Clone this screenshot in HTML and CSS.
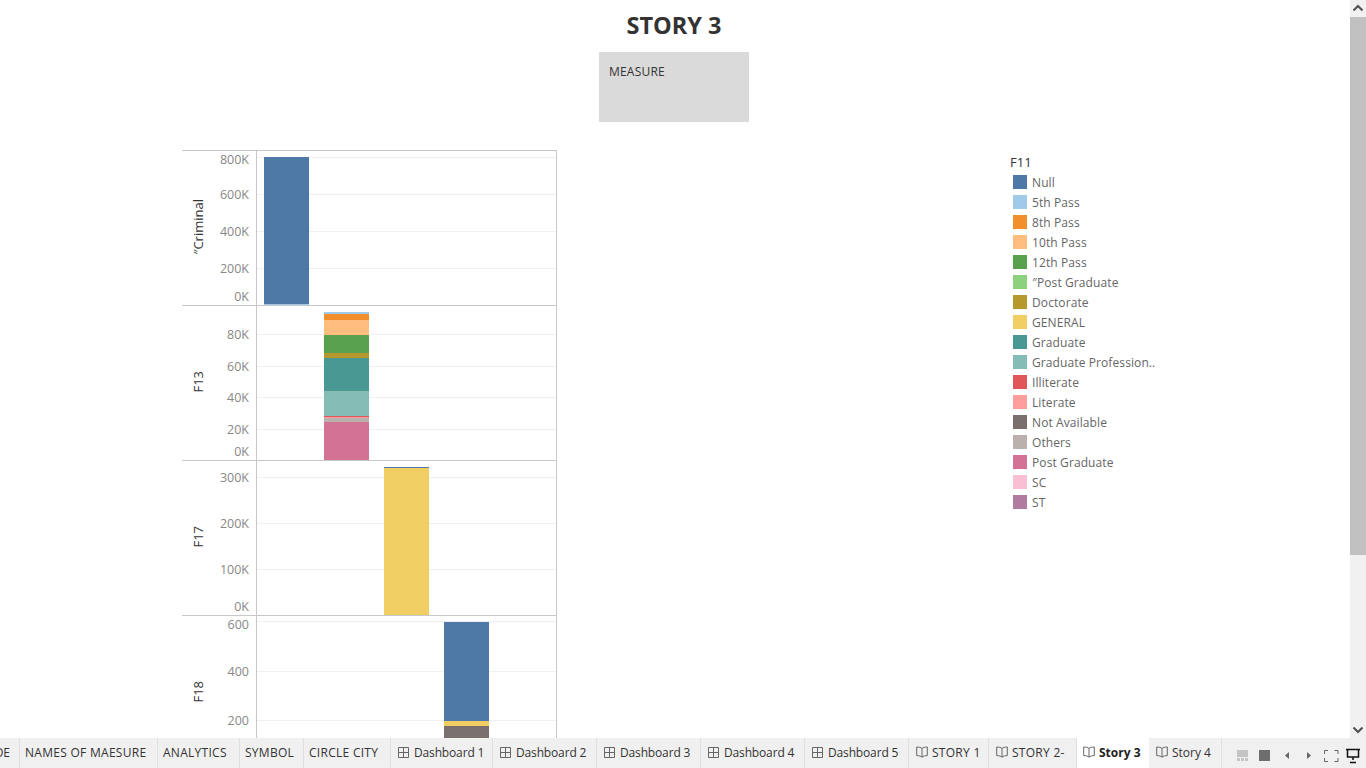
FILE: index.html
```html
<!DOCTYPE html>
<html lang="en">
<head>
<meta charset="utf-8">
<title>Story 3</title>
<link rel="stylesheet" href="styles.css">
</head>
<body>
<svg class="defs" width="0" height="0" aria-hidden="true">
  <symbol id="i-grid" viewBox="0 0 11 11"><path d="M.5.5h10v10H.5zM5.5.5v10M.5 5.5h10" fill="none" stroke="#666"/></symbol>
  <symbol id="i-book" viewBox="0 0 12 12"><path d="M6 2.500C5 1.500 3 1 .7 1v8.600c2.300 0 4.300.5 5.300 1.600 1-1.100 3-1.600 5.300-1.600V1C9 1 7 1.500 6 2.500zM6 2.500v8.700" fill="none" stroke="#666"/></symbol>
</svg>
<div class="main">
  <div class="content">
    <h1 class="title">STORY 3</h1>
    <div class="measure">MEASURE</div>
    <div class="dash">
      <div class="chart">
        <section class="pane">
          <div class="axis-title"><span>″Criminal</span></div>
          <div class="axis">
            <span class="tick" style="top:0px">800K</span>
            <span class="tick" style="top:35px">600K</span>
            <span class="tick" style="top:72px">400K</span>
            <span class="tick" style="top:109px">200K</span>
            <span class="tick" style="top:137px">0K</span>
          </div>
          <div class="plot">
            <i class="grid" style="top:6px"></i><i class="grid" style="top:43px"></i><i class="grid" style="top:80px"></i><i class="grid" style="top:117px"></i>
            <div class="bar c1" style="top:6px"><b class="null" style="height:147px"></b><b class="p5" style="height:1px"></b></div>
          </div>
        </section>
        <section class="pane">
          <div class="axis-title"><span>F13</span></div>
          <div class="axis">
            <span class="tick" style="top:20px">80K</span>
            <span class="tick" style="top:52px">60K</span>
            <span class="tick" style="top:83px">40K</span>
            <span class="tick" style="top:115px">20K</span>
            <span class="tick" style="top:137px">0K</span>
          </div>
          <div class="plot">
            <i class="grid" style="top:28px"></i><i class="grid" style="top:60px"></i><i class="grid" style="top:91px"></i><i class="grid" style="top:123px"></i>
            <div class="bar c2" style="top:6px">
              <b class="p5" style="height:2px"></b><b class="p8" style="height:6px"></b><b class="p10" style="height:15px"></b><b class="p12" style="height:18px"></b><b class="doc" style="height:5px"></b><b class="grad" style="height:33px"></b><b class="prof" style="height:25px"></b><b class="illit" style="height:1px"></b><b class="lit" style="height:1px"></b><b class="oth" style="height:4px"></b><b class="post" style="height:38px"></b>
            </div>
          </div>
        </section>
        <section class="pane">
          <div class="axis-title"><span>F17</span></div>
          <div class="axis">
            <span class="tick" style="top:8px">300K</span>
            <span class="tick" style="top:54px">200K</span>
            <span class="tick" style="top:100px">100K</span>
            <span class="tick" style="top:137px">0K</span>
          </div>
          <div class="plot">
            <i class="grid" style="top:16px"></i><i class="grid" style="top:62px"></i><i class="grid" style="top:108px"></i>
            <div class="bar c3" style="top:6px"><b class="null" style="height:1px"></b><b class="gen" style="height:147px"></b></div>
          </div>
        </section>
        <section class="pane">
          <div class="axis-title"><span>F18</span></div>
          <div class="axis">
            <span class="tick" style="top:0px">600</span>
            <span class="tick" style="top:47px">400</span>
            <span class="tick" style="top:96px">200</span>
          </div>
          <div class="plot">
            <i class="grid" style="top:5px"></i><i class="grid" style="top:55px"></i><i class="grid" style="top:104px"></i>
            <div class="bar c4" style="top:6px"><b class="null" style="height:99px"></b><b class="gen" style="height:5px"></b><b class="na" style="height:45px"></b></div>
          </div>
        </section>
      </div>
      <aside class="legend">
        <div class="legend-title">F11</div>
        <ul class="legend-list">
          <li><i class="null"></i>Null</li>
          <li><i class="p5"></i>5th Pass</li>
          <li><i class="p8"></i>8th Pass</li>
          <li><i class="p10"></i>10th Pass</li>
          <li><i class="p12"></i>12th Pass</li>
          <li><i class="qpost"></i>″Post Graduate</li>
          <li><i class="doc"></i>Doctorate</li>
          <li><i class="gen"></i>GENERAL</li>
          <li><i class="grad"></i>Graduate</li>
          <li><i class="prof"></i>Graduate Profession..</li>
          <li><i class="illit"></i>Illiterate</li>
          <li><i class="lit"></i>Literate</li>
          <li><i class="na"></i>Not Available</li>
          <li><i class="oth"></i>Others</li>
          <li><i class="post"></i>Post Graduate</li>
          <li><i class="sc"></i>SC</li>
          <li><i class="st"></i>ST</li>
        </ul>
      </aside>
    </div>
  </div>
  <div class="scrollbar">
    <button class="sb-btn" aria-label="Up"><svg width="16" height="17" viewBox="0 0 16 17"><path d="M3.500 10.500 8 6l4.500 4.500" fill="none" stroke="#505050" stroke-width="2"/></svg></button>
    <div class="sb-track"><div class="sb-thumb"></div></div>
    <button class="sb-btn" aria-label="Down"><svg width="16" height="17" viewBox="0 0 16 17"><path d="M3.500 6.500 8 11l4.500-4.500" fill="none" stroke="#505050" stroke-width="2"/></svg></button>
  </div>
</div>
<nav class="tabs">
  <div class="tab t-first"><span>DE</span></div>
  <div class="tab caps t-names">NAMES OF MAESURE</div>
  <div class="tab caps t-ana">ANALYTICS</div>
  <div class="tab caps t-sym">SYMBOL</div>
  <div class="tab caps t-cir">CIRCLE CITY</div>
  <div class="tab db t-db1"><svg class="ti"><use href="#i-grid"/></svg>Dashboard 1</div>
  <div class="tab db t-db"><svg class="ti"><use href="#i-grid"/></svg>Dashboard 2</div>
  <div class="tab db t-db"><svg class="ti"><use href="#i-grid"/></svg>Dashboard 3</div>
  <div class="tab db t-db"><svg class="ti"><use href="#i-grid"/></svg>Dashboard 4</div>
  <div class="tab db t-db"><svg class="ti"><use href="#i-grid"/></svg>Dashboard 5</div>
  <div class="tab st-tab caps t-s1"><svg class="ti"><use href="#i-book"/></svg>STORY 1</div>
  <div class="tab st-tab caps t-s2"><svg class="ti"><use href="#i-book"/></svg>STORY 2-</div>
  <div class="tab st-tab t-s3 active"><svg class="ti"><use href="#i-book"/></svg>Story 3</div>
  <div class="tab st-tab t-s4"><svg class="ti"><use href="#i-book"/></svg>Story 4</div>
  <div class="controls">
    <svg width="144" height="30" viewBox="0 0 144 30">
      <path d="M15 12h11v7H15zM15 20h3v3h-3zM19 20h3v3h-3zM23 20h3v3h-3z" fill="#c4c4c4"/>
      <path d="M37 12h11v11H37z" fill="#6e6e6e"/>
      <path d="M67 14v7l-4-3.500z" fill="#666"/>
      <path d="M85 14v7l4-3.500z" fill="#666"/>
      <path d="M102.500 16v-3.500h3.500M112.500 12.500h3.500V16M116 20v3.500h-3.500M106 23.500h-3.500V20" fill="none" stroke="#666"/>
      <path d="M124 11.500h14M125.500 12v7h11v-7M131 19v3M128 24.500h6" fill="none" stroke="#111" stroke-width="1.500"/>
    </svg>
  </div>
</nav>
</body>
</html>
```
FILE: styles.css
```css
* { box-sizing: border-box; }
html, body { margin: 0; height: 100%; overflow: hidden; }
body {
  width: 1366px;
  height: 768px;
  display: flex;
  flex-direction: column;
  background: #fff;
  font-family: "Open Sans", "Noto Sans", sans-serif;
  font-size: 12px;
  color: #333;
}
.defs { position: absolute; }
.main { display: flex; height: 738px; }
.content { width: 1350px; height: 738px; overflow: hidden; }

.title {
  margin: 0;
  width: 1348px;
  height: 52px;
  padding-top: 9px;
  text-align: center;
  font-size: 23.5px;
  line-height: 32px;
  font-weight: 700;
  color: #333;
}
.measure {
  width: 150px;
  height: 70px;
  margin: 0 0 28px 599px;
  padding: 11px 10px;
  background: #dadada;
  line-height: 17px;
  letter-spacing: .2px;
  color: #333;
}

.dash { display: flex; align-items: flex-start; padding-left: 182px; }
.chart { width: 375px; border-right: 1px solid #c8c8c8; }
.pane { display: flex; height: 155px; border-top: 1px solid #c8c8c8; }
.axis-title { width: 32px; padding: 0 0 3px; display: flex; align-items: center; justify-content: center; color: #333; font-size: 13px; }
.axis-title span { writing-mode: vertical-rl; transform: rotate(180deg); line-height: 16px; }
.axis { position: relative; width: 42px; }
.tick {
  position: absolute;
  right: 7px;
  margin-top: 1px;
  line-height: 16px;
  color: #888;
  font-size: 12.5px;
}
.plot { position: relative; flex: 1; border-left: 1px solid #c8c8c8; }
.grid { position: absolute; left: 0; right: 0; height: 1px; background: #f0f0f0; }
.bar { position: absolute; width: 45px; display: flex; flex-direction: column; }
.bar b { display: block; flex: none; }
.c1 { left: 7px; }
.c2 { left: 67px; }
.c3 { left: 127px; }
.c4 { left: 187px; }

.null { background: #4e79a7; }
.p5 { background: #a0cbe8; }
.p8 { background: #f28e2b; }
.p10 { background: #ffbe7d; }
.p12 { background: #59a14f; }
.qpost { background: #8cd17d; }
.doc { background: #b6992d; }
.gen { background: #f1ce63; }
.grad { background: #499894; }
.prof { background: #86bcb6; }
.illit { background: #e15759; }
.lit { background: #ff9d9a; }
.na { background: #79706e; }
.oth { background: #bab0ac; }
.post { background: #d37295; }
.sc { background: #fabfd2; }
.st { background: #b07aa1; }

.legend { margin-left: 453px; padding-top: 4px; }
.legend-title { line-height: 16px; font-size: 13px; color: #333; }
.legend-list { list-style: none; margin: 0; padding: 2px 0 0 3px; }
.legend-list li { display: flex; align-items: center; height: 20px; color: #666; white-space: nowrap; letter-spacing: .1px; }
.legend-list i { display: block; width: 14px; height: 14px; margin-right: 5px; }

.scrollbar { width: 16px; height: 738px; display: flex; flex-direction: column; background: #f1f1f1; }
.sb-btn { display: block; width: 16px; height: 17px; padding: 0; border: 0; background: none; }
.sb-btn svg { display: block; }
.sb-track { flex: 1; }
.sb-thumb { height: 538px; background: #c1c1c1; }

.tabs { display: flex; height: 30px; background: #f0f0f0; overflow: hidden; }
.tab {
  display: flex;
  align-items: center;
  flex: none;
  height: 30px;
  padding: 0 0 2px 5px;
  border-right: 1px solid #e0e0e0;
  color: #333;
  white-space: nowrap;
}
.caps { letter-spacing: .28px; }
.db { letter-spacing: -.15px; padding-left: 7px; }
.ti { width: 11px; height: 11px; margin-right: 5px; flex: none; }
.t-first { width: 20px; padding: 0 9px 2px 0; justify-content: flex-end; }
.t-names { width: 138px; }
.t-ana { width: 82px; }
.t-sym { width: 64px; }
.t-cir { width: 87px; }
.t-db1 { width: 102px; }
.t-db { width: 104px; }
.st-tab { padding-left: 7px; }
.st-tab .ti { width: 12px; height: 12px; margin-right: 4px; }
.t-s1 { width: 80px; }
.t-s2 { width: 88px; }
.t-s3 { width: 72px; padding-left: 6px; }
.t-s4 { width: 73px; }
.active { background: #fff; font-weight: 700; color: #222; border-right: 0; }
.controls { flex: none; width: 144px; height: 30px; }
.controls svg { display: block; }
```
